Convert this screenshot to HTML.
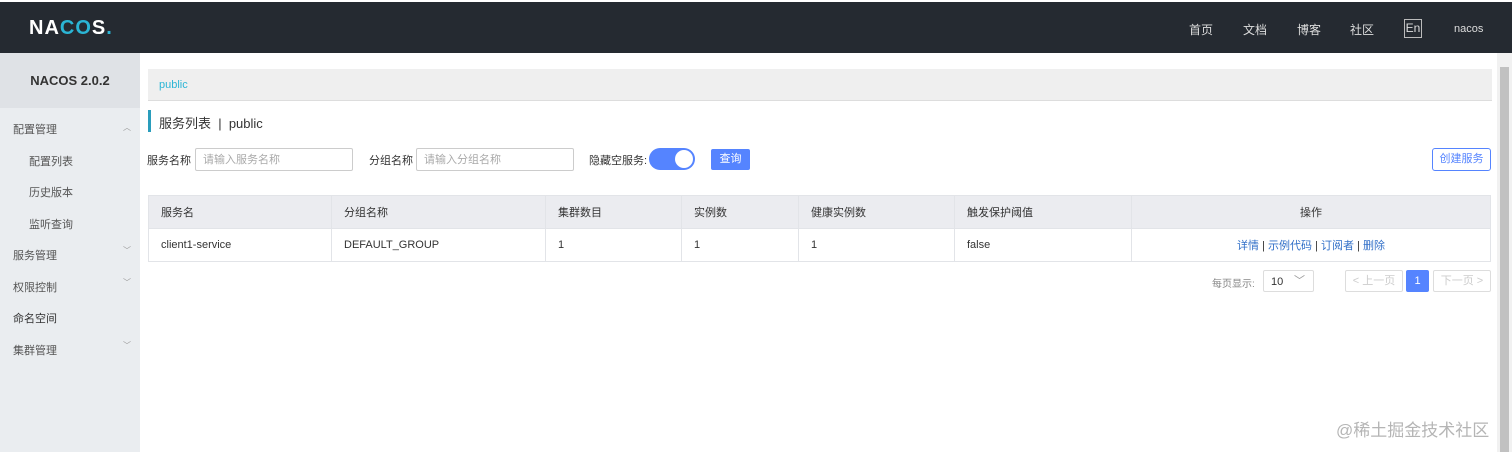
<!DOCTYPE html>
<html><head><meta charset="utf-8"><style>
*{box-sizing:border-box;margin:0;padding:0}
body{width:1512px;height:452px;overflow:hidden;background:#fff;font-family:"Liberation Sans","Noto Sans CJK SC",sans-serif;font-size:12px;color:#333;position:relative}
.hd{position:absolute;left:0;top:2px;width:1512px;height:51px;background:#252a31}
.logo{position:absolute;left:29px;top:15px;color:#fff;font-size:20px;font-weight:bold;letter-spacing:1px}
.logo i{color:#2bb5d5;font-style:normal}
.nav{position:absolute;top:19px;color:#ddd;font-size:12px}
.en{position:absolute;left:1404px;top:17px;width:18px;height:19px;border:1px solid #bbb;color:#ddd;font-size:12px;text-align:center;line-height:17px}
.sb{position:absolute;left:0;top:53px;width:140px;height:399px;background:#eaedf0}
.ver{height:55px;background:#dfe2e6;text-align:center;line-height:55px;font-weight:bold;font-size:13px;color:#333}
.mi{position:absolute;font-size:11px;color:#555}
.ar{position:absolute;left:123px;font-size:8px;color:#999}
.crumb{position:absolute;left:148px;top:69px;width:1344px;height:32px;background:#efefef;border-bottom:1px solid #ddd;color:#2bb5d5;font-size:11px;line-height:32px;padding-left:11px}
.title{position:absolute;left:148px;top:110px;height:22px;border-left:3px solid #2a9dbc;padding-left:8px;line-height:28px;font-size:13px;color:#333}
.lb{position:absolute;top:152px;font-size:11px;color:#333}
.inp{position:absolute;top:148px;height:23px;border:1px solid #ccc;border-radius:2px;color:#aaa;font-size:11px;line-height:22px;padding-left:7px}
.sw{position:absolute;left:649px;top:148px;width:46px;height:22px;background:#5584ff;border-radius:11px}
.sw b{position:absolute;right:2px;top:2px;width:18px;height:18px;background:#fff;border-radius:50%}
.btn{position:absolute;left:711px;top:149px;width:39px;height:21px;background:#5584ff;color:#fff;border-radius:2px;text-align:center;line-height:21px;font-size:11px}
.cb{position:absolute;left:1432px;top:148px;width:59px;height:23px;border:1px solid #5584ff;border-radius:3px;color:#5584ff;text-align:center;line-height:21px;font-size:11px}
table{position:absolute;left:148px;top:195px;width:1343px;border-collapse:collapse;font-size:11px}
td,th{border:1px solid #e2e4e8;text-align:left;font-weight:normal;padding-left:12px;color:#333}
th{background:#ebecf0;height:33px}
td{height:33px;background:#fff}
a{color:#3270c8;text-decoration:none}
.pg{position:absolute;top:270px;height:22px;border:1px solid #ddd;border-radius:2px;font-size:11px;line-height:20px;text-align:center;color:#ccc}
.sc{position:absolute;left:1497px;top:53px;width:15px;height:399px;background:#f1f1f1}
.sc b{position:absolute;left:3px;top:14px;width:9px;height:385px;background:#c1c1c1}
.wm{position:absolute;left:1336px;top:416px;font-size:17px;color:#b5b5b5}
</style></head><body>
<div class="hd">
<div class="logo">NA<i>CO</i>S<i>.</i></div>
<span class="nav" style="left:1189px">首页</span>
<span class="nav" style="left:1243px">文档</span>
<span class="nav" style="left:1297px">博客</span>
<span class="nav" style="left:1350px">社区</span>
<div class="en">En</div>
<span class="nav" style="left:1454px;top:21px;font-size:11px">nacos</span>
</div>
<div class="sb"><div class="ver">NACOS 2.0.2</div></div>
<span class="mi" style="left:13px;top:121px">配置管理</span><span class="ar" style="top:122px">︿</span>
<span class="mi" style="left:29px;top:153px">配置列表</span>
<span class="mi" style="left:29px;top:184px">历史版本</span>
<span class="mi" style="left:29px;top:216px">监听查询</span>
<span class="mi" style="left:13px;top:247px">服务管理</span><span class="ar" style="top:245px">﹀</span>
<span class="mi" style="left:13px;top:279px">权限控制</span><span class="ar" style="top:277px">﹀</span>
<span class="mi" style="left:13px;top:310px;color:#333">命名空间</span>
<span class="mi" style="left:13px;top:342px">集群管理</span><span class="ar" style="top:340px">﹀</span>
<div class="crumb">public</div>
<div class="title">服务列表 &nbsp;|&nbsp; public</div>
<span class="lb" style="left:147px">服务名称</span>
<div class="inp" style="left:195px;width:158px">请输入服务名称</div>
<span class="lb" style="left:369px">分组名称</span>
<div class="inp" style="left:416px;width:158px">请输入分组名称</div>
<span class="lb" style="left:589px">隐藏空服务:</span>
<div class="sw"><b></b></div>
<div class="btn">查询</div>
<div class="cb">创建服务</div>
<table>
<tr><th style="width:183px">服务名</th><th style="width:214px">分组名称</th><th style="width:136px">集群数目</th><th style="width:117px">实例数</th><th style="width:156px">健康实例数</th><th style="width:177px">触发保护阈值</th><th style="text-align:center;padding:0">操作</th></tr>
<tr><td>client1-service</td><td>DEFAULT_GROUP</td><td>1</td><td>1</td><td>1</td><td>false</td><td style="text-align:center;padding:0"><a>详情</a> | <a>示例代码</a> | <a>订阅者</a> | <a>删除</a></td></tr>
</table>
<span style="position:absolute;left:1212px;top:275px;font-size:10px;color:#888">每页显示:</span>
<div class="pg" style="left:1263px;width:51px;color:#333;text-align:left;padding-left:7px;line-height:22px">10 <span style="position:absolute;right:8px;top:-1px;color:#999">﹀</span></div>
<div class="pg" style="left:1345px;width:58px">&lt; 上一页</div>
<div class="pg" style="left:1406px;width:23px;background:#5584ff;border-color:#5584ff;color:#fff">1</div>
<div class="pg" style="left:1433px;width:58px">下一页 &gt;</div>
<div class="sc"><b></b></div>
<div class="wm">@稀土掘金技术社区</div>
</body></html>
